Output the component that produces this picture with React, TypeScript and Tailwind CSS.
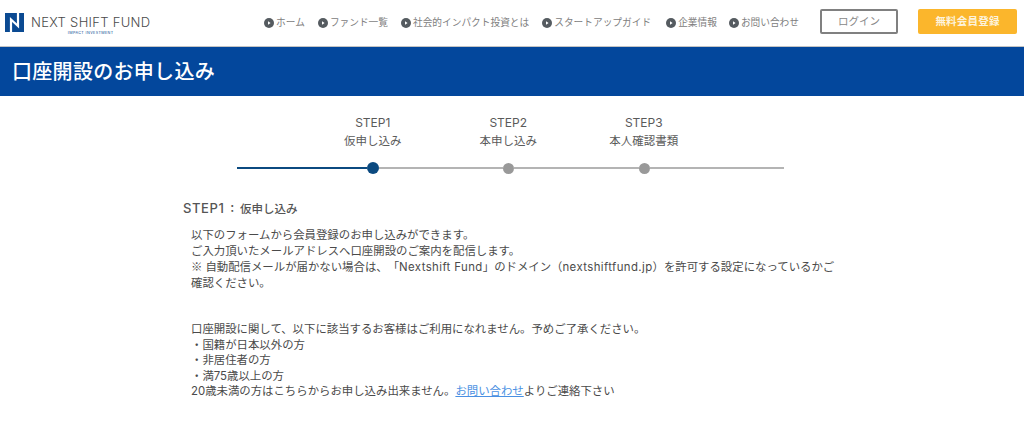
const FONT = "font-['Inter','Noto_Sans_CJK_JP',sans-serif] [text-spacing-trim:space-all]";

const navItems = [
  { label: "ホーム", gap: "mr-[13px]" },
  { label: "ファンド一覧", gap: "mr-[13px]" },
  { label: "社会的インパクト投資とは", gap: "mr-[13px]" },
  { label: "スタートアップガイド", gap: "mr-[15px]" },
  { label: "企業情報", gap: "mr-[12px]" },
  { label: "お問い合わせ", gap: "mr-[14px]" },
];

const steps = [
  { title: "STEP1", name: "仮申し込み" },
  { title: "STEP2", name: "本申し込み" },
  { title: "STEP3", name: "本人確認書類" },
];

function NavIcon() {
  return (
    <svg width="10" height="10" viewBox="0 0 10 10" className="mr-[2px] shrink-0">
      <circle cx="5" cy="5" r="5" fill="#555b60" />
      <path d="M4 3.2 6.6 5 4 6.8Z" fill="#fff" />
    </svg>
  );
}

function Logo() {
  return (
    <div className="flex items-start">
      <svg width="19" height="19" viewBox="0 0 19 19" className="mt-[13px] ml-[5px] shrink-0">
        <path d="M0 0h19v19H0Z" fill="#0b4a92" />
        <path d="M6 19V6.5L13 13V0" fill="none" stroke="#fff" strokeWidth="2.2" />
      </svg>
      <div className="mt-[14px] ml-[7px] flex flex-col items-center">
        <span className="text-[13px] leading-[16px] font-light tracking-[0.3px] whitespace-nowrap text-[#4a4a4a]">
          NEXT SHIFT FUND
        </span>
        <span className="text-[3.7px] leading-[5px] tracking-[0.4px] whitespace-nowrap text-[#0b4a92]">
          IMPACT INVESTMENT
        </span>
      </div>
    </div>
  );
}

function Header() {
  return (
    <header className="flex h-[47px] items-start border-b border-[#c4c4c4] bg-white">
      <Logo />
      <nav className="ml-auto flex items-center pt-[16px]">
        {navItems.map((item) => (
          <a key={item.label} className={`flex items-center text-[9.7px] leading-[14px] whitespace-nowrap text-[#808080] ${item.gap}`}>
            <NavIcon />
            {item.label}
          </a>
        ))}
      </nav>
      <div className="mt-[9px] mr-[7px] ml-[7px] flex gap-[20px]">
        <button className="h-[25px] w-[78px] rounded-[2px] border-2 border-[#808080] text-[10.5px] text-[#888]">
          ログイン
        </button>
        <button className="h-[25px] w-[99px] rounded-[2px] bg-[#fbb62c] text-[10.5px] font-semibold tracking-[0.2px] text-[#fdf3dc]">
          無料会員登録
        </button>
      </div>
    </header>
  );
}

function Stepper() {
  return (
    <section className="pt-[18px]">
      <div className="ml-[305px] flex">
        {steps.map((s) => (
          <div key={s.title} className="w-[135.5px] text-center text-[11.5px] leading-[18px] text-[#5a5a5a]">
            <div className="text-[12px]">{s.title}</div>
            <div>{s.name}</div>
          </div>
        ))}
      </div>
      <div className="mt-[12px] ml-[237px] flex h-[12px] w-[547px] items-center">
        <div className="h-[2px] w-[130px] bg-[#0b4a80]" />
        <div className="h-[12px] w-[12px] shrink-0 rounded-full bg-[#0b4a80]" />
        <div className="h-[2px] w-[124px] bg-[#b4b4b4]" />
        <div className="h-[11px] w-[11px] shrink-0 rounded-full bg-[#999]" />
        <div className="h-[2px] w-[125px] bg-[#b4b4b4]" />
        <div className="h-[11px] w-[11px] shrink-0 rounded-full bg-[#999]" />
        <div className="h-[2px] flex-1 bg-[#b4b4b4]" />
      </div>
    </section>
  );
}

export default function App() {
  return (
    <div className={`h-[424px] w-[1024px] overflow-hidden bg-white ${FONT}`}>
      <Header />
      <div className="flex h-[49px] items-center bg-[#03479c] pl-[12px] text-[20px] font-medium tracking-[0.3px] text-white">
        口座開設のお申し込み
      </div>
      <Stepper />
      <main className="mt-[26px] ml-[183px] w-[670px]">
        <h2 className="text-[11.5px] leading-[16px] font-medium text-[#555]">
          <span className="text-[13px] tracking-[0.6px]">STEP1</span>
          <span className="mr-[2px] ml-[2px]">：</span>
          仮申し込み
        </h2>
        <div className="mt-[11px] ml-[8px] text-[11.4px] leading-[15.5px] text-[#4a4a4a]">
          <p>以下のフォームから会員登録のお申し込みができます。</p>
          <p>ご入力頂いたメールアドレスへ口座開設のご案内を配信します。</p>
          <p>
            <span className="mr-[3px] font-['Noto_Sans_CJK_JP',sans-serif]">※</span>自動配信メールが届かない場合は、「
            <span className="tracking-[0.4px]">Nextshift Fund</span>
            」のドメイン（<span className="tracking-[0.4px]">nextshiftfund.jp</span>）を許可する設定になっているかご
            <br />
            確認ください。
          </p>
          <p className="mt-[31px]">口座開設に関して、以下に該当するお客様はご利用になれません。予めご了承ください。</p>
          <p>・国籍が日本以外の方</p>
          <p>・非居住者の方</p>
          <p>・満75歳以上の方</p>
          <p>
            20歳未満の方はこちらからお申し込み出来ません。
            <a className="text-[#4a90e2] underline">お問い合わせ</a>
            よりご連絡下さい
          </p>
        </div>
      </main>
    </div>
  );
}
